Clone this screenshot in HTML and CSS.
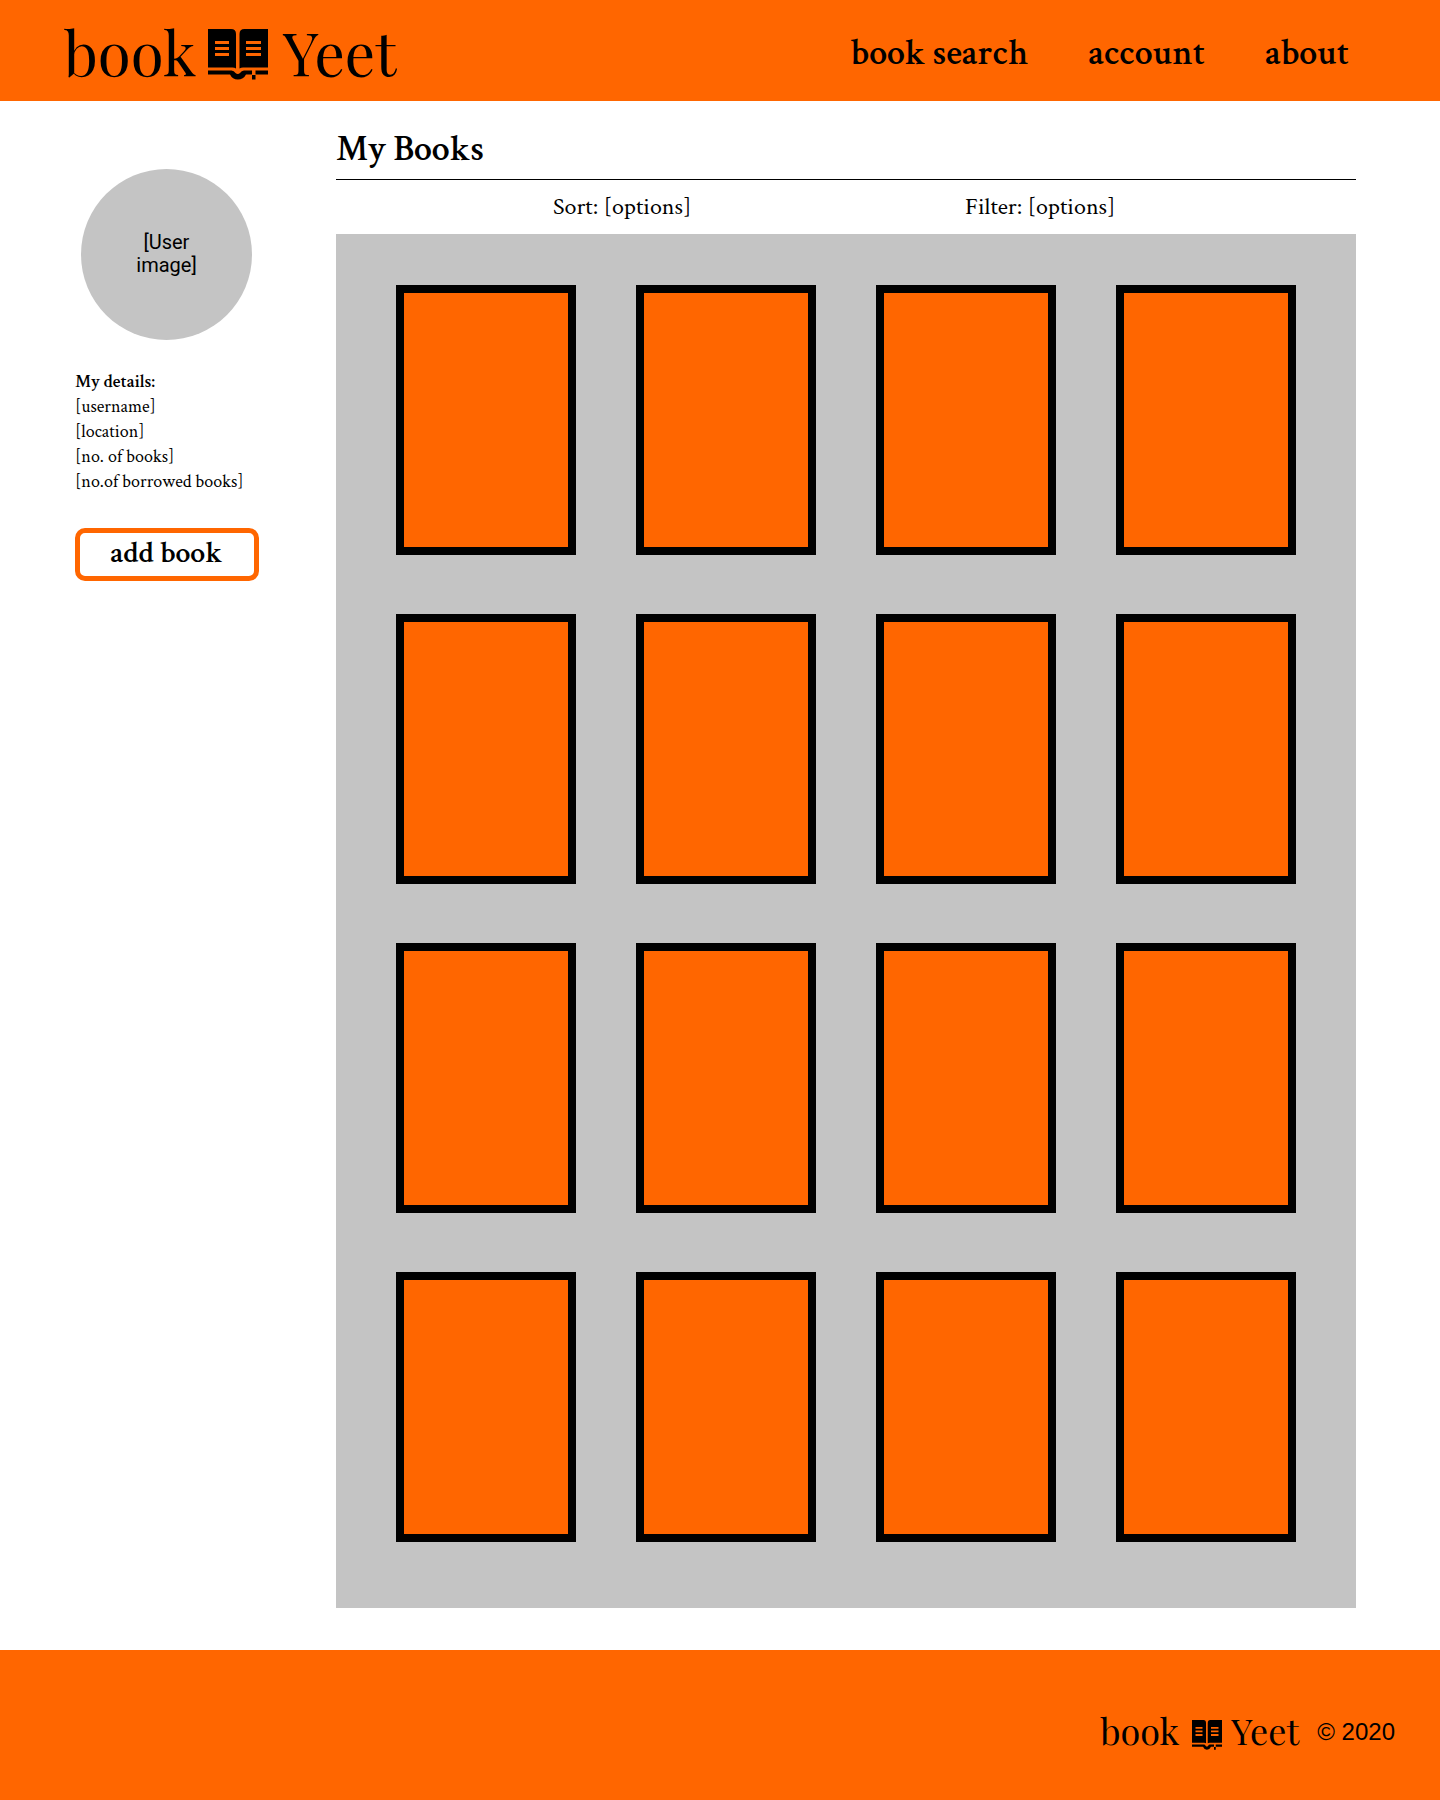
FILE: index.html
```html
<!DOCTYPE html>
<html lang="en">
<head>
<meta charset="utf-8">
<title>book Yeet</title>
<link rel="stylesheet" href="styles.css">
</head>
<body>
<svg class="defs" aria-hidden="true">
  <symbol id="book" viewBox="0 0 60 51" preserveAspectRatio="none">
    <path fill-rule="evenodd" d="M0 0H23Q28 0 28 5V39.5Q26.500 38.600 24.500 38.600H0ZM7 12V15H21V12ZM7 18V21H21V18ZM7 24V27H21V24Z"/>
    <path fill-rule="evenodd" d="M60 0H36.500Q31.500 0 31.500 5V39.500Q33 38.600 35 38.600H60ZM38 12V15H53V12ZM38 18V21H53V18ZM38 24V27H53V24Z"/>
    <path d="M0 41.500H23.500Q26 41.500 27.500 44Q29.800 46.200 32 44Q33.500 41.500 36 41.500H44V45.500H38Q35.500 50.500 29.800 50.500Q24.500 50.500 22 45.500H0ZM47.500 41.500H60V45.500H47.500ZM44 46H47.500V50.500H44Z"/>
  </symbol>
</svg>
<header class="header">
  <a class="logo"><span class="logo-book">book</span><svg class="logo-icon"><use href="#book"/></svg><span class="logo-yeet">Yeet</span></a>
  <nav class="nav"><a>book search</a><a>account</a><a>about</a></nav>
</header>
<main class="main">
  <aside class="profile">
    <div class="avatar">[User<br>image]</div>
    <ul class="details">
      <li class="details-title">My details:</li>
      <li>[username]</li>
      <li>[location]</li>
      <li>[no. of books]</li>
      <li>[no.of borrowed books]</li>
    </ul>
    <button class="add">add book</button>
  </aside>
  <section class="books">
    <h1 class="title">My Books</h1>
    <div class="controls"><span class="sort">Sort: [options]</span><span>Filter: [options]</span></div>
    <div class="shelf">
      <div class="card"></div><div class="card"></div><div class="card"></div><div class="card"></div>
      <div class="card"></div><div class="card"></div><div class="card"></div><div class="card"></div>
      <div class="card"></div><div class="card"></div><div class="card"></div><div class="card"></div>
      <div class="card"></div><div class="card"></div><div class="card"></div><div class="card"></div>
    </div>
  </section>
</main>
<footer class="footer">
  <a class="logo logo-small"><span class="logo-book">book</span><svg class="logo-icon"><use href="#book"/></svg><span class="logo-yeet">Yeet</span></a>
  <span class="copyright">© 2020</span>
</footer>
</body>
</html>
```
FILE: styles.css
```css
* { box-sizing: border-box; }
body {
  margin: 0;
  width: 1440px;
  height: 1800px;
  display: flex;
  flex-direction: column;
  background: #fff;
  color: #000;
  font-family: "Crimson Text", "Liberation Serif", serif;
}
.defs { display: none; }
.header {
  height: 101px;
  display: flex;
  align-items: flex-start;
  justify-content: space-between;
  padding: 21px 91px 0 64px;
  background: #f60;
}
.logo {
  display: flex;
  align-items: flex-start;
  font-family: "Playfair Display", "Liberation Serif", serif;
  font-size: 60px;
  line-height: 60px;
  white-space: nowrap;
}
.logo-book { width: 144px; }
.logo-icon { width: 60px; height: 51px; margin-top: 8px; flex: none; }
.logo-yeet { margin-left: 15px; }
.nav {
  display: flex;
  gap: 60px;
  padding-top: 15px;
  font-size: 36px;
  font-weight: 600;
  line-height: 36px;
}
.main { display: flex; height: 1549px; }
.profile { width: 336px; padding: 68px 0 0 75px; }
.avatar {
  width: 171px;
  height: 171px;
  margin-left: 6px;
  padding-bottom: 2px;
  display: flex;
  align-items: center;
  justify-content: center;
  border-radius: 50%;
  background: #c4c4c4;
  font: 20px/23px Roboto, sans-serif;
  text-align: center;
}
.details {
  margin: 29px 0 0;
  padding: 0;
  list-style: none;
  font-size: 18px;
  line-height: 25px;
}
.details-title { font-weight: 600; }
.add {
  width: 184px;
  height: 53px;
  margin-top: 34px;
  padding: 0 1px 2px 0;
  border: 5px solid #f60;
  border-radius: 10px;
  background: #fff;
  color: #000;
  font: 600 30px/38px "Crimson Text", "Liberation Serif", serif;
}
.books { width: 1020px; }
.title {
  height: 79px;
  margin: 0;
  padding-top: 31px;
  border-bottom: 1px solid #000;
  font-size: 36px;
  font-weight: 600;
  line-height: 36px;
}
.controls {
  height: 54px;
  display: flex;
  padding: 14px 0 0 217px;
  font-size: 24px;
  line-height: 26px;
}
.sort { width: 412px; }
.shelf {
  height: 1374px;
  display: grid;
  grid-template-columns: repeat(4, 180px);
  grid-auto-rows: 270px;
  gap: 59px 60px;
  padding: 51px 60px 0;
  background: #c4c4c4;
}
.card { border: 8px solid #000; background: #f60; }
.footer {
  height: 150px;
  display: flex;
  align-items: flex-start;
  justify-content: flex-end;
  padding: 62px 45px 0 0;
  background: #f60;
}
.logo-small { font-size: 36px; line-height: 36px; }
.logo-small .logo-book { width: 92px; }
.logo-small .logo-icon { width: 30px; height: 30px; margin-top: 8px; }
.logo-small .logo-yeet { width: 86px; margin-left: 9px; }
.copyright { padding-top: 7px; font: 24px/26px "Liberation Sans", sans-serif; }
```
